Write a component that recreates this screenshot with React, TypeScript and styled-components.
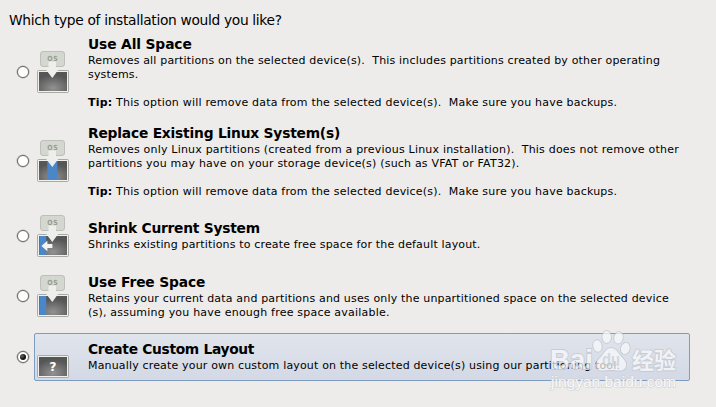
import React, { useState } from "react";
import styled, { createGlobalStyle } from "styled-components";

const GlobalStyle = createGlobalStyle`
  html, body { margin: 0; padding: 0; background: #edeceb; }
  * { box-sizing: border-box; }
`;

const Page = styled.main`
  position: relative;
  width: 716px;
  height: 407px;
  overflow: hidden;
  background: #edeceb;
  color: #000;
  font-family: "DejaVu Sans", sans-serif;
`;

const Question = styled.h1`
  margin: 0;
  height: 28px;
  padding: 12px 0 0 9px;
  font-size: 13.8px;
  letter-spacing: -0.33px;
  line-height: 16px;
  font-weight: 400;
  white-space: pre;
`;

const OptionList = styled.div`
  display: flex;
  flex-direction: column;
`;

const OptionRow = styled.div<{ $height: number; $gap: number }>`
  display: flex;
  align-items: center;
  height: ${(p) => p.$height}px;
  margin-top: ${(p) => p.$gap}px;
  padding-left: 17px;
  cursor: pointer;
`;

const Radio = styled.span<{ $on: boolean }>`
  display: flex;
  align-items: center;
  justify-content: center;
  flex: none;
  width: 12px;
  height: 12px;
  border: 1px solid #6c6c6c;
  border-radius: 50%;
  background: #fff;
  box-shadow: 0 0 0 0.5px #aaa;
  &::after {
    content: "";
    width: 6px;
    height: 6px;
    border-radius: 50%;
    background: radial-gradient(circle at 35% 35%, #666 0, #111 55%);
    visibility: ${(p) => (p.$on ? "visible" : "hidden")};
  }
`;

const OptionButton = styled.div<{ $on: boolean }>`
  display: flex;
  align-items: center;
  width: 656px;
  height: 100%;
  margin-left: 5px;
  padding-left: 2px;
  border: 1px solid ${(p) => (p.$on ? "#7f9bbf" : "transparent")};
  border-radius: 2px;
  background: ${(p) => (p.$on ? "linear-gradient(#e0e4ec, #d3d9e5)" : "none")};
`;

const IconSvg = styled.svg`
  flex: none;
  display: block;
  width: 32px;
  height: 42px;
`;

const Copy = styled.div<{ $multiline: boolean }>`
  margin-left: 19px;
  padding-top: ${(p) => (p.$multiline ? 2 : 0)}px;
`;

const Title = styled.h2<{ $tracking: number }>`
  margin: 0;
  height: 18px;
  font-size: 13.8px;
  letter-spacing: ${(p) => p.$tracking}px;
  line-height: 17px;
  font-weight: 700;
  white-space: pre;
`;

const Line = styled.p<{ $tracking?: number }>`
  margin: 0;
  height: 14px;
  font-size: 11px;
  line-height: 14px;
  letter-spacing: ${(p) => p.$tracking ?? 0.2}px;
  white-space: pre;
`;

const WatermarkLayer = styled.svg`
  position: absolute;
  left: 540px;
  top: 325px;
  pointer-events: none;
`;

type Kind = "all" | "replace" | "shrink" | "free" | "custom";

function DiskIcon({ kind }: { kind: Kind }) {
  const id = `disk-${kind}`;
  return (
    <IconSvg viewBox="0 0 32 42">
      <defs>
        <radialGradient id={id} cx="50%" cy="85%" r="70%">
          <stop offset="0" stopColor="#929292" />
          <stop offset="1" stopColor="#565656" />
        </radialGradient>
      </defs>
      {kind !== "custom" && (
        <>
          <rect x="3.5" y="0.5" width="24" height="15" rx="2.5" fill="#d3d7cf" stroke="#bcc0b8" />
          <text x="15.8" y="10.3" textAnchor="middle" fontSize="7" fontWeight="700" letterSpacing=".7" textLength="11" lengthAdjust="spacingAndGlyphs" fill="#969c93" fontFamily="DejaVu Sans, sans-serif">OS</text>
        </>
      )}
      <rect x="0.5" y="19.5" width="31" height="22" rx="1" fill="#f0f0ed" stroke="#a8aaa5" />
      <rect x="2" y="21" width="28" height="19" fill={`url(#${id})`} />
      {kind === "replace" && <rect x="10.3" y="21" width="10" height="19" fill="#4b87c8" />}
      {(kind === "shrink" || kind === "free") && <rect x="2.4" y="21" width="6.8" height="19" fill="#4b87c8" />}
      {kind !== "custom" && <path d="M11.5 10.5h7.5v6h4L15.3 27 7.3 16.5h4.2z" fill="#eeeeec" />}
      {kind === "shrink" && <path d="M4.4 31l6-5.3v3.3h5v4h-5v3.3z" fill="#f3f3f1" />}
      {kind === "custom" && (
        <text x="16" y="35" textAnchor="middle" fontSize="12.5" fontWeight="700" fill="#fff" fontFamily="DejaVu Sans, sans-serif">?</text>
      )}
    </IconSvg>
  );
}

function Watermark() {
  return (
    <WatermarkLayer width="150" height="80" viewBox="0 0 150 80">
      <g fill="#fafbfc" stroke="#bfc4cc" strokeWidth="1.8" strokeLinejoin="round" paintOrder="stroke" opacity=".7">
        <text x="10" y="44" fontSize="28" fontWeight="700" textLength="43" lengthAdjust="spacingAndGlyphs" fontFamily="Liberation Sans, sans-serif">Bai</text>
        <ellipse cx="57.5" cy="21" rx="4.2" ry="5.8" transform="rotate(-12 57.5 21)" />
        <ellipse cx="66.7" cy="12" rx="4.3" ry="6" />
        <ellipse cx="78.5" cy="12.8" rx="4.3" ry="5.8" transform="rotate(12 78.5 12.8)" />
        <ellipse cx="85.3" cy="23.5" rx="4.3" ry="5.6" transform="rotate(15 85.3 23.5)" />
        <path d="M71 23c4 0 6.500 3.500 9 7 3 4 6 5.500 6 10 0 4-3 5.500-6.500 5.500-3 0-5-.5-8.500-.5s-6 .5-8.500 .5c-4 0-6.500-2-6.500-5.500 0-4 3.500-6 6.500-10 2.500-3.500 4.500-7 8.500-7z" />
        <text x="92" y="44" fontSize="23" fontWeight="700" textLength="44" lengthAdjust="spacingAndGlyphs" fontFamily="Noto Sans CJK SC, sans-serif">经验</text>
      </g>
      <text x="62" y="41" fontSize="18" fontWeight="700" textLength="18" lengthAdjust="spacingAndGlyphs" fill="#c3cad5" opacity=".65" fontFamily="Liberation Sans, sans-serif">du</text>
      <text x="11" y="62" fontSize="15.5" textLength="125" fill="#fafafa" stroke="#d2d4d8" strokeWidth="1.4" paintOrder="stroke" opacity=".9" fontFamily="Liberation Sans, sans-serif">jingyan.baidu.com</text>
    </WatermarkLayer>
  );
}

type TextLine = { text: string; tracking: number };
type Option = { kind: Kind; height: number; gap: number; title: string; titleTracking: number; lines: TextLine[]; tip?: string };

const TIP = "This option will remove data from the selected device(s).  Make sure you have backups.";

const OPTIONS: Option[] = [
  {
    kind: "all", height: 88, gap: 0, title: "Use All Space", titleTracking: -0.12, tip: TIP,
    lines: [
      { text: "Removes all partitions on the selected device(s).  This includes partitions created by other operating", tracking: 0.168 },
      { text: "systems.", tracking: 0.17 },
    ],
  },
  {
    kind: "replace", height: 88, gap: 1, title: "Replace Existing Linux System(s)", titleTracking: -0.2, tip: TIP,
    lines: [
      { text: "Removes only Linux partitions (created from a previous Linux installation).  This does not remove other", tracking: 0.206 },
      { text: "partitions you may have on your storage device(s) (such as VFAT or FAT32).", tracking: 0.2 },
    ],
  },
  {
    kind: "shrink", height: 48, gap: 7, title: "Shrink Current System", titleTracking: -0.23,
    lines: [{ text: "Shrinks existing partitions to create free space for the default layout.", tracking: 0.162 }],
  },
  {
    kind: "free", height: 62, gap: 5, title: "Use Free Space", titleTracking: -0.13,
    lines: [
      { text: "Retains your current data and partitions and uses only the unpartitioned space on the selected device", tracking: 0.17 },
      { text: "(s), assuming you have enough free space available.", tracking: 0.21 },
    ],
  },
  {
    kind: "custom", height: 48, gap: 6, title: "Create Custom Layout", titleTracking: -0.31,
    lines: [{ text: "Manually create your own custom layout on the selected device(s) using our partitioning tool.", tracking: 0.165 }],
  },
];

export default function App() {
  const [selected, setSelected] = useState<Kind>("custom");
  return (
    <Page>
      <GlobalStyle />
      <Question>Which type of installation would you like?</Question>
      <OptionList role="radiogroup">
        {OPTIONS.map((o) => (
          <OptionRow key={o.kind} $height={o.height} $gap={o.gap} role="radio" aria-checked={selected === o.kind} onClick={() => setSelected(o.kind)}>
            <Radio $on={selected === o.kind} />
            <OptionButton $on={selected === o.kind}>
              <DiskIcon kind={o.kind} />
              <Copy $multiline={o.lines.length > 1}>
                <Title $tracking={o.titleTracking}>{o.title}</Title>
                {o.lines.map((l) => <Line key={l.text} $tracking={l.tracking}>{l.text}</Line>)}
                {o.tip && (
                  <>
                    <Line />
                    <Line><b>Tip:</b> {o.tip}</Line>
                  </>
                )}
              </Copy>
            </OptionButton>
          </OptionRow>
        ))}
      </OptionList>
      <Watermark />
    </Page>
  );
}
